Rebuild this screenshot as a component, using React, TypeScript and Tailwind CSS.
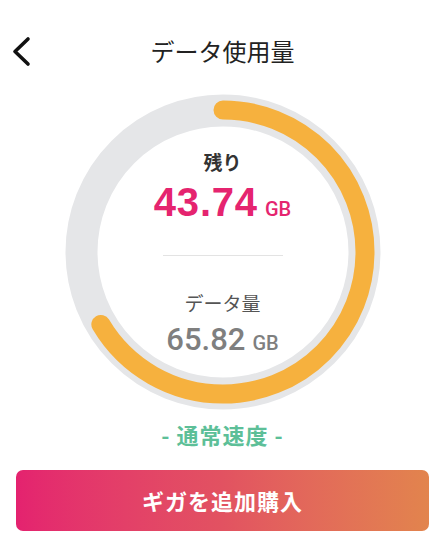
import React from "react";

const jp = { fontFamily: '"Noto Sans CJK JP", "Noto Sans", sans-serif' };
const num = { fontFamily: '"Liberation Sans", Arial, sans-serif' };
const med = { fontFamily: 'Roboto, "Liberation Sans", Arial, sans-serif' };

function Ring() {
  const r = 142;
  const c = 2 * Math.PI * r;
  const frac = 43.74 / 65.82;
  return (
    <svg width="316" height="316" viewBox="0 0 316 316" className="absolute inset-0">
      <circle cx="158" cy="158" r="141.5" fill="none" stroke="#E5E6E8" strokeWidth="32" />
      <circle
        cx="158"
        cy="158"
        r={r}
        fill="none"
        stroke="#F6B13E"
        strokeWidth="19"
        strokeLinecap="round"
        strokeDasharray={`${c * frac} ${c}`}
        transform="rotate(-90 158 158)"
      />
    </svg>
  );
}

export default function App() {
  return (
    <div className="w-[445px] h-[537px] bg-white overflow-hidden">
      <div className="grid grid-cols-[1fr_auto_1fr] items-center pt-[34px] h-[68px]">
        <div className="pl-[11px] flex items-center">
          <svg width="24" height="34" viewBox="0 0 24 34">
            <path d="M17 5 L4 17.5 L17 30" fill="none" stroke="#111" strokeWidth="3.6" strokeLinecap="round" strokeLinejoin="round" />
          </svg>
        </div>
        <div className="text-[24px] leading-[34px] text-[#222]" style={jp}>データ使用量</div>
        <div />
      </div>

      <div className="flex justify-center mt-[26px]">
        <div className="relative w-[316px] h-[316px]">
          <Ring />
          <div className="relative flex flex-col items-center pt-[56px]">
            <div className="text-[19px] leading-[24px] font-bold text-[#333]" style={jp}>残り</div>
            <div className="flex items-baseline mt-[8px] text-[#E5246F]">
              <span className="text-[40px] leading-[40px] font-bold tracking-[0.8px]" style={num}>43.74</span>
              <span className="text-[20px] leading-[20px] font-medium ml-[7px]" style={med}>GB</span>
            </div>
            <div className="w-[120px] h-px bg-[#E3E3E3] mt-[33px]" />
            <div className="text-[19px] leading-[26px] text-[#555] mt-[34px]" style={jp}>データ量</div>
            <div className="flex items-baseline mt-[8px] text-[#7F7F7F]" style={med}>
              <span className="text-[31px] leading-[32px] font-medium">65.82</span>
              <span className="text-[20px] leading-[20px] font-medium ml-[7px]">GB</span>
            </div>
          </div>
        </div>
      </div>

      <div className="flex justify-center mt-[10px]">
        <div className="text-[22px] leading-[28px] font-bold text-[#5DBF98] tracking-[1px]" style={jp}>- 通常速度 -</div>
      </div>

      <div className="mx-4 mt-[22px] h-[61px] rounded-[7px] bg-gradient-to-r from-[#E4226F] via-[#E25261] to-[#E2844D] flex items-center justify-center">
        <span className="text-[22px] font-bold text-white tracking-[1px]" style={jp}>ギガを追加購入</span>
      </div>
    </div>
  );
}
